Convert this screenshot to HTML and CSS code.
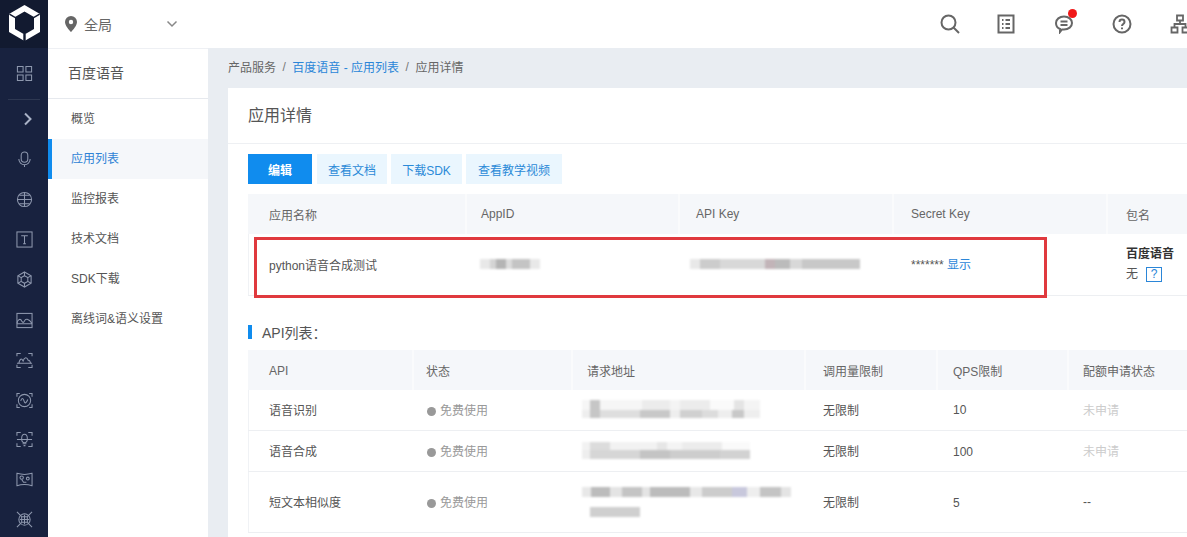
FILE: index.html
```html
<!DOCTYPE html>
<html lang="zh">
<head>
<meta charset="utf-8">
<title>应用详情</title>
<link rel="stylesheet" href="styles.css">
</head>
<body>
<div class="app">
  <aside class="rail">
    <div class="logo">
      <svg width="31" height="36" viewBox="0 0 31 36"><path fill="#fff" fill-rule="evenodd" d="M15.500 0 31 9V27L15.500 36 0 27V9ZM15.500 6.500 25 12V24L15.500 29.500 6 24V12Z"/><path d="M14.300 29h2.400v7h-2.400ZM0 9.800l6.500 3.600.6-1.200L.8 8.600ZM31 9.800l-6.500 3.600-.6-1.200 6.300-3.600Z" fill="#121a30"/></svg>
    </div>
    <div class="rail-item rail-tall">
      <svg class="ri" viewBox="0 0 18 18"><path d="M1.500 1.500h6v6h-6zM10.500 1.500h6v6h-6zM1.500 10.500h6v6h-6zM10.500 10.500h6v6h-6z"/></svg>
    </div>
    <div class="rail-rule"></div>
    <div class="rail-item rail-arrow">
      <svg width="10" height="14" viewBox="0 0 10 14"><path d="M2 1.500 7.500 7 2 12.500" fill="none" stroke="#a9b2c6" stroke-width="2"/></svg>
    </div>
    <div class="rail-item">
      <svg class="ri" viewBox="0 0 18 18"><rect x="5.500" y="1" width="7" height="11" rx="3.500"/><path d="M3 8.500a6 6 0 0 0 12 0M9 14.500V17"/></svg>
    </div>
    <div class="rail-item">
      <svg class="ri" viewBox="0 0 18 18"><circle cx="9" cy="9" r="7.500"/><path d="M1.500 9h15M9 1.500v15M3.500 4.500h11M3.500 13.500h11"/></svg>
    </div>
    <div class="rail-item">
      <svg class="ri" viewBox="0 0 18 18"><rect x="1" y="1" width="16" height="16"/><path d="M5.500 5h7M9 5v8.500M7.500 13.500h3"/></svg>
    </div>
    <div class="rail-item">
      <svg class="ri" viewBox="0 0 18 18"><path d="M9 1 16 5v8l-7 4-7-4V5z"/><path d="M9 5l3.500 2v4L9 13l-3.500-2V7zM2 5l3.500 2M16 5l-3.500 2M9 17v-4M9 1v4M2 13l3.500-2M16 13l-3.500-2"/></svg>
    </div>
    <div class="rail-item rail-lower">
      <svg class="ri" viewBox="0 0 18 18"><rect x="1" y="1.500" width="16" height="15"/><path d="M1 12c1-5 4-5 5-2.500 1 2 2.500 2 3 0 1-2.500 4-3 8 2.500M1 12.500h16"/></svg>
    </div>
    <div class="rail-item">
      <svg class="ri" viewBox="0 0 18 18"><path d="M1 4.500V1.500h4M13 1.500h4v3M1 13.500v3h4M13 16.500h4v-3M1 12h16"/><path d="M3 12c1-5.500 3-5.500 4.500-2.500C9 5 11.500 5 13 9c1-1 1.500 0 2.500 3"/></svg>
    </div>
    <div class="rail-item">
      <svg class="ri" viewBox="0 0 18 18"><circle cx="9" cy="9" r="6.500"/><path d="M5 9.500c1-3.500 2.500-3.500 3.500 0s2.500 2 4-1.500M1 5V1.500h3M14 1.500h3V5M1 13v3.500h3M14 16.500h3V13"/></svg>
    </div>
    <div class="rail-item rail-short">
      <svg class="ri" viewBox="0 0 18 18"><path d="M1 5V1.500h4M13 1.500h4V5M1 13v3.500h4M13 16.500h4V13M1 9h16"/><ellipse cx="9" cy="8" rx="3" ry="4.500"/><path d="M7 13.500h4M8 15.500h2"/></svg>
    </div>
    <div class="rail-item">
      <svg class="ri" viewBox="0 0 18 18"><path d="M1 2.500c5 1.500 11 1.500 16 0v13c-5-1.500-11-1.500-16 0z"/><circle cx="6" cy="7" r="1.800"/><circle cx="12.500" cy="8" r="1.500"/><path d="M6 9l2 3h3"/></svg>
    </div>
    <div class="rail-item">
      <svg class="ri" viewBox="0 0 18 18"><path d="M1 1l5 5M17 1l-5 5M1 17l5-5M17 17l-5-5"/><circle cx="9" cy="9" r="6"/><path d="M6 6h6v6H6zM4 9h10M9 4v10"/></svg>
    </div>
  </aside>

  <div class="shell">
    <header class="topbar">
      <div class="scope">
        <svg width="12" height="16" viewBox="0 0 12 16"><path fill="#666" fill-rule="evenodd" d="M6 0a6 6 0 0 1 6 6c0 3.500-4 8-6 10C4 14 0 9.500 0 6a6 6 0 0 1 6-6Zm0 3.800a2.200 2.200 0 1 0 0 4.400 2.200 2.200 0 0 0 0-4.400Z"/></svg>
        <span class="scope-name">全局</span>
        <svg class="scope-caret" width="12" height="8" viewBox="0 0 12 8"><path d="M1.500 1.500 6 6l4.500-4.500" fill="none" stroke="#888" stroke-width="1.500"/></svg>
      </div>
      <div class="tools">
        <svg class="tool tool-first" viewBox="0 0 20 20"><circle cx="8.500" cy="8.500" r="7"/><path d="M13.500 13.500 19 19"/></svg>
        <svg class="tool" viewBox="0 0 20 20"><rect x="2.500" y="1.500" width="15" height="17"/><path d="M6 6h1.500M9.500 6H14M6 10h1.500M9.500 10H14M6 14h1.500M9.500 14H14"/></svg>
        <span class="tool-wrap">
          <svg class="tool" viewBox="0 0 20 20"><path d="M10 2.500c4.500 0 8 2.800 8 6.500s-3.500 6.500-8 6.500H8L6 18v-3C3.500 14 2 11.800 2 9c0-3.700 3.500-6.500 8-6.500Z"/><path d="M6.500 7.500h7M6.500 11h7"/></svg>
          <span class="dot"></span>
        </span>
        <svg class="tool" viewBox="0 0 20 20"><circle cx="10" cy="10" r="8.500"/><path d="M7.500 8c0-3.200 5-3.200 5 0 0 2-2.500 2-2.500 4"/><path d="M10 13.500v1.800"/></svg>
        <svg class="tool tool-last" viewBox="0 0 20 20"><path d="M7 1.500h6v5H7zM1.500 13.500h6v5h-6zM12.500 13.500h6v5h-6zM10 6.500V10M4.500 13.500V10h11v3.500"/></svg>
      </div>
    </header>

    <div class="body">
      <nav class="side">
        <div class="side-title">百度语音</div>
        <a class="side-link">概览</a>
        <a class="side-link is-active">应用列表</a>
        <a class="side-link">监控报表</a>
        <a class="side-link">技术文档</a>
        <a class="side-link">SDK下载</a>
        <a class="side-link">离线词&amp;语义设置</a>
      </nav>

      <main class="main">
        <div class="crumbs">
          <span>产品服务</span><i>/</i><a>百度语音 - 应用列表</a><i>/</i><span>应用详情</span>
        </div>
        <section class="card">
          <h1 class="card-title">应用详情</h1>
          <div class="card-body">
            <div class="actions">
              <button class="btn btn-primary btn-edit">编辑</button>
              <button class="btn btn-docs">查看文档</button>
              <button class="btn btn-sdk">下载SDK</button>
              <button class="btn btn-video">查看教学视频</button>
            </div>
            <div class="app-wrap">
              <table class="tbl tbl-app">
                <thead>
                  <tr><th>应用名称</th><th>AppID</th><th>API Key</th><th>Secret Key</th><th>包名</th></tr>
                </thead>
                <tbody>
                  <tr>
                    <td>python语音合成测试</td>
                    <td><div class="mask mask-id"></div></td>
                    <td><div class="mask mask-key"></div></td>
                    <td><span class="stars">*******</span> <a class="link">显示</a></td>
                    <td class="pkg"><b>百度语音</b><div class="pkg-line">无<span class="qmark">?</span></div></td>
                  </tr>
                </tbody>
              </table>
              <div class="highlight"></div>
            </div>

            <h2 class="sub"><span class="sub-bar"></span>API列表：</h2>
            <table class="tbl tbl-api">
              <thead>
                <tr><th>API</th><th>状态</th><th>请求地址</th><th>调用量限制</th><th>QPS限制</th><th>配额申请状态</th></tr>
              </thead>
              <tbody>
                <tr>
                  <td>语音识别</td>
                  <td class="state"><span class="state-dot"></span>免费使用</td>
                  <td><div class="mask mask-url1"></div></td>
                  <td>无限制</td><td>10</td><td class="muted">未申请</td>
                </tr>
                <tr>
                  <td>语音合成</td>
                  <td class="state"><span class="state-dot"></span>免费使用</td>
                  <td><div class="mask mask-url2"></div></td>
                  <td>无限制</td><td>100</td><td class="muted">未申请</td>
                </tr>
                <tr class="row-tall">
                  <td>短文本相似度</td>
                  <td class="state"><span class="state-dot"></span>免费使用</td>
                  <td><div class="mask mask-url3"></div><div class="mask mask-url3b"></div></td>
                  <td>无限制</td><td>5</td><td>--</td>
                </tr>
              </tbody>
            </table>
          </div>
        </section>
      </main>
    </div>
  </div>
</div>
</body>
</html>
```
FILE: styles.css
```css
* { box-sizing: border-box; }
html, body { margin: 0; padding: 0; height: 100%; overflow: hidden; }
body {
  font-family: "Liberation Sans", "Noto Sans CJK SC", sans-serif;
  font-size: 12px;
  color: #555;
  background: #e9edf2;
}
.app { display: flex; height: 537px; width: 1187px; overflow: hidden; }

/* left rail */
.rail { width: 48px; flex: none; background: #18223f; display: flex; flex-direction: column; }
.logo { height: 48px; flex: none; background: #121a30; display: flex; align-items: center; justify-content: center; padding-bottom: 2px; }
.rail-item { height: 40px; flex: none; display: flex; align-items: center; justify-content: center; }
.rail-tall { height: 51px; }
.rail-rule { height: 1px; flex: none; margin: 0 8px; background: #2e3852; }
.rail-arrow { height: 39px; padding: 0 0 2px 8px; }
.rail-lower { margin-top: 1px; }
.rail-short { height: 39px; }
.ri { width: 17px; height: 17px; fill: none; stroke: #8e98ae; stroke-width: 1.100; }

/* top bar */
.shell { flex: 1; min-width: 0; display: flex; flex-direction: column; }
.topbar { height: 48px; flex: none; background: #fff; display: flex; align-items: center; justify-content: space-between; }
.scope { display: flex; align-items: center; padding-left: 17px; }
.scope-name { margin-left: 7px; font-size: 14px; color: #666; }
.scope-caret { margin-left: 54px; }
.tools { display: flex; align-items: center; gap: 38px; margin-right: -3px; }
.tool { width: 20px; height: 20px; fill: none; stroke: #666; stroke-width: 2; display: block; }
.tool-first { margin-right: -2px; }
.tool-wrap { position: relative; display: block; }
.tool-last { stroke-width: 1.800; }
.dot { position: absolute; top: -5px; right: -3px; width: 9px; height: 9px; border-radius: 50%; background: #f01818; }

/* sidebar */
.body { flex: 1; min-height: 0; display: flex; }
.side { width: 160px; flex: none; background: #fff; border-top: 1px solid #eef0f4; }
.side-title { height: 50px; padding: 0 20px; line-height: 49px; font-size: 14px; color: #555; border-bottom: 1px solid #e6e9ee; }
.side-link { display: block; height: 40px; line-height: 41px; padding-left: 23px; color: #555; }
.is-active { background: #f5f7fa; color: #2f83d6; box-shadow: inset 4px 0 0 #108cee; }

/* main */
.main { flex: 1; min-width: 0; padding-left: 20px; }
.crumbs { height: 40px; padding-bottom: 3px; display: flex; align-items: center; color: #666; }
.crumbs i { font-style: normal; margin: 0 6.500px; color: #777; }
.crumbs a { color: #2b86d8; }
.card { background: #fff; height: 449px; overflow: hidden; }
.card-title { margin: 0; height: 56px; padding: 0 20px; line-height: 56px; font-size: 16px; font-weight: 400; color: #555; border-bottom: 1px solid #eef0f3; }
.card-body { padding: 10px 0 0 20px; }
.actions { display: flex; gap: 4px; }
.btn { height: 30px; border: 0; padding: 0; background: #eaf6fe; color: #2b8ad8; font: inherit; }
.btn-primary { background: #108cee; color: #fff; font-weight: 700; }
.btn-edit { width: 64px; }
.btn-docs { width: 70px; margin-left: 1px; }
.btn-sdk { width: 71px; }
.btn-video { width: 96px; }

/* tables */
.tbl { border-collapse: collapse; table-layout: fixed; }
.tbl th { height: 40px; padding: 0; text-align: left; font-weight: 400; color: #666; background: #f5f7fa; border-right: 2px solid #fafbfc; }
.tbl td { padding: 0; border-bottom: 1px solid #edeff2; color: #555; }
.tbl td:first-child { box-shadow: inset 1px 0 0 #f0f2f5; }

.tbl-app { width: 1070px; margin-top: 10px; }
.tbl-app th:nth-child(1) { width: 218px; }
.tbl-app th:nth-child(2) { width: 213px; }
.tbl-app th:nth-child(3) { width: 214px; }
.tbl-app th:nth-child(4) { width: 214px; }
.tbl-app th:nth-child(5) { width: 211px; }
.tbl-app th:nth-child(1), .tbl-app td:nth-child(1) { padding-left: 21px; }
.tbl-app th:nth-child(2) { padding-left: 14px; }
.tbl-app td:nth-child(2) { padding-left: 14px; }
.tbl-app th:nth-child(3) { padding-left: 16px; }
.tbl-app td:nth-child(3) { padding-left: 11px; }
.tbl-app th:nth-child(4) { padding-left: 17px; }
.tbl-app td:nth-child(4) { padding-left: 18px; padding-bottom: 2px; }
.tbl-app th:nth-child(5) { padding-left: 18px; }
.tbl-app td:nth-child(5) { padding-left: 19px; }
.tbl-app td { height: 61px; }
.app-wrap { position: relative; }
.highlight { position: absolute; left: 6px; top: 43px; width: 793px; height: 61px; border: 3px solid #e0393e; pointer-events: none; }
.stars { color: #555; }
.link { color: #2b86d8; }
.pkg b { display: block; color: #333; line-height: 18px; }
.pkg-line { display: flex; align-items: center; gap: 8px; line-height: 18px; margin-top: 2px; }
.qmark { width: 16px; height: 15px; border: 1px solid #2b86d8; color: #2b86d8; display: flex; align-items: center; justify-content: center; font-size: 12px; line-height: 1; }

.sub { margin: 28px 0 10px; height: 16px; display: flex; align-items: center; font-size: 14px; font-weight: 400; color: #555; }
.sub-bar { width: 4px; height: 14px; background: #108cee; margin-right: 10px; }

.tbl-api { width: 1070px; }
.tbl-api th { padding-top: 2px; }
.tbl-api td { height: 41px; padding-bottom: 1px; }
.tbl-api .row-tall td { height: 61px; }
.tbl-api th:nth-child(1) { width: 165px; }
.tbl-api th:nth-child(2) { width: 159px; }
.tbl-api th:nth-child(3) { width: 233px; }
.tbl-api th:nth-child(4) { width: 132px; }
.tbl-api th:nth-child(5) { width: 131px; }
.tbl-api th:nth-child(6) { width: 250px; }
.tbl-api th:nth-child(1), .tbl-api td:nth-child(1) { padding-left: 21px; }
.tbl-api th:nth-child(2) { padding-left: 12px; }
.tbl-api td:nth-child(2) { padding-left: 14px; }
.tbl-api th:nth-child(3) { padding-left: 14px; }
.tbl-api td:nth-child(3) { padding-left: 10px; }
.tbl-api th:nth-child(4) { padding-left: 17px; }
.tbl-api td:nth-child(4) { padding-left: 18px; }
.tbl-api th:nth-child(5) { padding-left: 15px; }
.tbl-api td:nth-child(5) { padding-left: 16px; padding-bottom: 0; padding-top: 1px; }
.tbl-api th:nth-child(6) { padding-left: 14px; }
.tbl-api td:nth-child(6) { padding-left: 15px; }
.tbl-api td.state { color: #999; }
.state-dot { display: inline-block; width: 9px; height: 9px; border-radius: 50%; background: #999; margin-right: 4px; vertical-align: -1px; }
.tbl-api td.muted { color: #ccc; }

/* blurred, redacted values */
.mask { height: 10px; filter: blur(1px); background-color: #d4d4d4; }
.mask-id { width: 60px; background-image: linear-gradient(90deg, #e8e8e8 0 10px, #d4d4d4 10px 16px, #b4b4b4 16px 26px, #dcdcdc 26px 32px, #c4c4c4 32px 50px, #e8e8e8 50px); }
.mask-key { width: 170px; background-image: linear-gradient(90deg, #e8e8e8 0 10px, #ccc 10px 30px, #d8d8d8 30px 75px, #c2b4b8 75px 85px, #bbb 85px 100px, #d8d8d8 100px 112px, #c8c8c8 112px 170px); }
.mask-url1 {
  width: 178px; height: 18px; background-color: transparent;
  background-image:
    linear-gradient(90deg, transparent 0 8px, #c6c6c6 8px 18px, transparent 18px),
    linear-gradient(90deg, #f6f6f6 0 60px, #ececec 60px 88px, #f4f4f4 88px 98px, #ececec 98px 128px, #fafafa 128px 152px, #e4e4e4 152px 162px, #f4f4f4 162px),
    linear-gradient(90deg, #eee 0 18px, #dedede 18px 58px, #c8c8c8 58px 88px, #eee 88px 98px, #d0d0d0 98px 120px, #dcdcdc 120px 136px, #eee 136px 150px, #c8c8c8 150px 162px, #eee 162px);
  background-size: 100% 100%, 100% 10px, 100% 8px;
  background-position: 0 0, 0 0, 0 10px;
  background-repeat: no-repeat;
}
.mask-url2 {
  width: 168px; height: 17px; background-color: transparent;
  background-image:
    linear-gradient(90deg, #f2f2f2 0 8px, #dcdcdc 8px 28px, #f2f2f2 28px 75px, #e6e6e6 75px 85px, #f4f4f4 85px 100px, #ececec 100px 140px, #fafafa 140px),
    linear-gradient(90deg, #eee 0 8px, #d6d6d6 8px 58px, #c4c4c4 58px 88px, #cdcdcd 88px 138px, #d2d2d2 138px 168px);
  background-size: 100% 8px, 100% 9px;
  background-position: 0 0, 0 8px;
  background-repeat: no-repeat;
}
.mask-url3 { width: 209px; margin-bottom: 10px; background-image: linear-gradient(90deg, #e8e8e8 0 9px, #bcbcbc 9px 28px, #e4e4e4 28px 40px, #c4c4c4 40px 60px, #e4e4e4 60px 68px, #bcbcbc 68px 108px, #e8e8e8 108px 120px, #ccc 120px 150px, #c8c8dc 150px 165px, #eee 165px 178px, #c4c4c4 178px 199px, #e4e4e4 199px); }
.mask-url3b { width: 50px; margin-left: 8px; background-color: #cfcfcf; }
```
